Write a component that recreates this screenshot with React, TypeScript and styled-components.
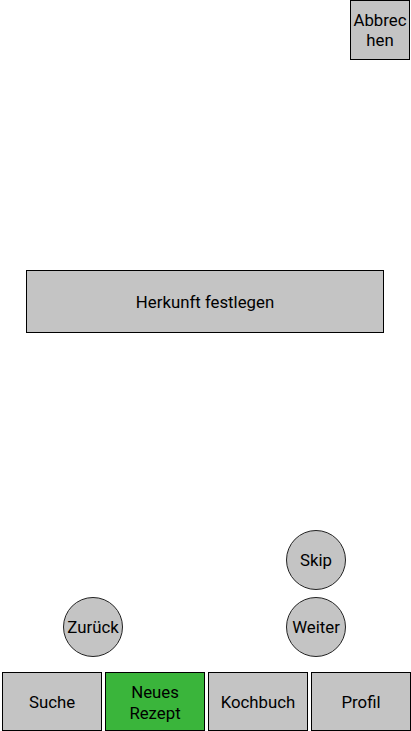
import React from "react";
import styled, { createGlobalStyle } from "styled-components";

const Global = createGlobalStyle`
  html, body { margin: 0; padding: 0; background: #fff; }
  body { font-family: Roboto, "Liberation Sans", sans-serif; }
  * { box-sizing: border-box; }
`;

const Page = styled.div`
  width: 411px;
  height: 731px;
  display: flex;
  flex-direction: column;
  overflow: hidden;
`;

const Header = styled.div`
  display: flex;
  justify-content: flex-end;
  padding-right: 1px;
`;

const baseButton = `
  font-family: Roboto, "Liberation Sans", sans-serif;
  font-size: 16.8px;
  line-height: 20.5px;
  color: #000;
  background: #c4c4c4;
  border: 1px solid #000;
  padding: 2px 0 0 0;
  display: flex;
  align-items: center;
  justify-content: center;
  text-align: center;
`;

const CancelButton = styled.button`
  ${baseButton}
  width: 60px;
  height: 60px;
  padding-top: 0;
  word-break: break-all;
`;

const Main = styled.div`
  padding: 210px 27px 0 26px;
`;

const WideButton = styled.button`
  ${baseButton}
  width: 358px;
  height: 63px;
`;

const Spacer = styled.div`
  flex: 1;
`;

const Actions = styled.div`
  display: flex;
  justify-content: space-between;
  align-items: flex-end;
  padding: 0 65px 0 63px;
  margin-bottom: 15px;
`;

const ActionColumn = styled.div`
  display: flex;
  flex-direction: column;
  gap: 7px;
`;

const Circle = styled.button`
  ${baseButton}
  width: 60px;
  height: 60px;
  padding-top: 0;
  border-radius: 50%;
  border-color: #222;
`;

const Nav = styled.nav`
  display: flex;
  gap: 3px;
  padding-left: 2px;
`;

const NavButton = styled.button<{ $active?: boolean }>`
  ${baseButton}
  width: 100px;
  height: 59px;
  background: ${(p) => (p.$active ? "#3ab53b" : "#c4c4c4")};
`;

export default function App() {
  return (
    <>
      <Global />
      <Page>
        <Header>
          <CancelButton>Abbrechen</CancelButton>
        </Header>
        <Main>
          <WideButton>Herkunft festlegen</WideButton>
        </Main>
        <Spacer />
        <Actions>
          <ActionColumn>
            <Circle>Zurück</Circle>
          </ActionColumn>
          <ActionColumn>
            <Circle>Skip</Circle>
            <Circle>Weiter</Circle>
          </ActionColumn>
        </Actions>
        <Nav>
          <NavButton>Suche</NavButton>
          <NavButton $active>Neues Rezept</NavButton>
          <NavButton>Kochbuch</NavButton>
          <NavButton>Profil</NavButton>
        </Nav>
      </Page>
    </>
  );
}
